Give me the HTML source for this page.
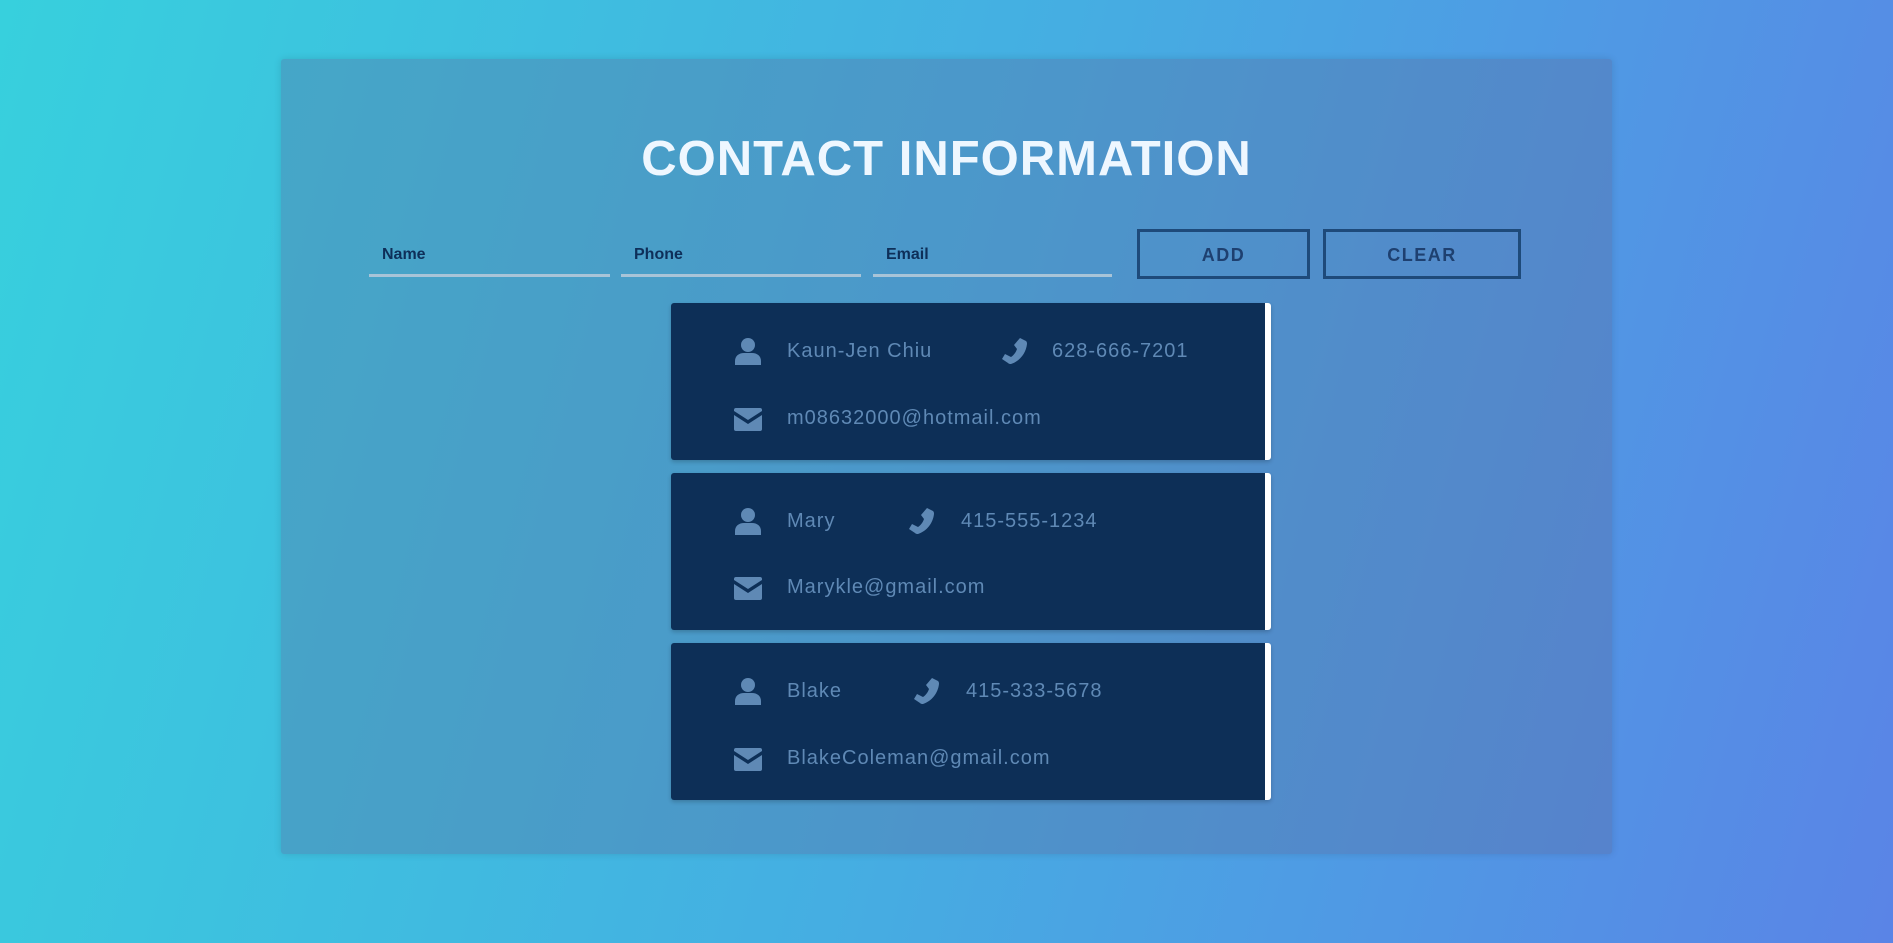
<!DOCTYPE html>
<html><head><meta charset="utf-8"><style>
*{margin:0;padding:0;box-sizing:border-box}
body{width:1893px;height:943px;overflow:hidden;background:linear-gradient(105deg,#37d0dd 0%,#45aee2 50%,#5a84e6 100%);font-family:"Liberation Sans",sans-serif;position:relative}
.panel{position:absolute;left:281px;top:59px;width:1331px;height:795px;background:rgba(90,105,155,0.34);box-shadow:0 0 8px rgba(0,0,0,0.12);border-radius:3px}
h1{position:absolute;left:0;width:1893px;top:134px;text-align:center;font-size:49px;font-weight:bold;color:#eef7ff;line-height:50px;letter-spacing:1px}
.in{position:absolute;top:245px;height:32px;border-bottom:3px solid #a8c4d8;font-size:16px;font-weight:bold;color:#0e2f59;padding-left:13px;line-height:20px}
.btn{position:absolute;top:229px;height:50px;border:3px solid #1e4a7a;color:#1e4070;font-weight:bold;font-size:18px;letter-spacing:1.5px;text-align:center;line-height:46px}
.card{position:absolute;left:671px;width:600px;height:157px;background:#0d2f57;border-right:6px solid #fff;border-radius:3px;box-shadow:0 2px 4px rgba(0,0,0,0.2)}
.t{position:absolute;color:#5f89b5;font-size:20px;letter-spacing:1px;line-height:24px}
.ic{position:absolute}
</style></head><body>
<div class="panel"></div>
<h1>CONTACT INFORMATION</h1>
<div class="in" style="left:369px;width:241px">Name</div>
<div class="in" style="left:621px;width:240px">Phone</div>
<div class="in" style="left:873px;width:239px">Email</div>
<div class="btn" style="left:1137px;width:173px">ADD</div>
<div class="btn" style="left:1323px;width:198px">CLEAR</div>

<div class="card" style="top:303px">
<svg class="ic" style="left:63px;top:34px" width="28" height="28" viewBox="0 0 28 28"><circle cx="14" cy="8" r="7" fill="#5f89b5"/><path d="M1 28v-4c0-5 4-8 9-8h8c5 0 9 3 9 8v4z" fill="#5f89b5"/></svg>
<div class="t" style="left:116px;top:36px">Kaun-Jen Chiu</div>
<svg class="ic" style="left:329px;top:34px" width="28" height="28" viewBox="0 0 28 28"><path d="M20 1l6 3c1 1 1 2 1 3-1 9-7 17-16 20-1 0-2 0-3-1l-6-4 3-5 6 3c3-2 5-5 6-8l-3-4z" fill="#5f89b5"/></svg>
<div class="t" style="left:381px;top:36px">628-666-7201</div>
<svg class="ic" style="left:63px;top:105px" width="28" height="23" viewBox="0 0 28 23"><path d="M0 2q0-2 2-2h24q2 0 2 2v1l-14 9-14-9z M0 7l14 9 14-9v14q0 2-2 2H2q-2 0-2-2z" fill="#5f89b5"/></svg>
<div class="t" style="left:116px;top:103px">m08632000@hotmail.com</div>
</div>

<div class="card" style="top:473px">
<svg class="ic" style="left:63px;top:34px" width="28" height="28" viewBox="0 0 28 28"><circle cx="14" cy="8" r="7" fill="#5f89b5"/><path d="M1 28v-4c0-5 4-8 9-8h8c5 0 9 3 9 8v4z" fill="#5f89b5"/></svg>
<div class="t" style="left:116px;top:36px">Mary</div>
<svg class="ic" style="left:236px;top:34px" width="28" height="28" viewBox="0 0 28 28"><path d="M20 1l6 3c1 1 1 2 1 3-1 9-7 17-16 20-1 0-2 0-3-1l-6-4 3-5 6 3c3-2 5-5 6-8l-3-4z" fill="#5f89b5"/></svg>
<div class="t" style="left:290px;top:36px">415-555-1234</div>
<svg class="ic" style="left:63px;top:104px" width="28" height="23" viewBox="0 0 28 23"><path d="M0 2q0-2 2-2h24q2 0 2 2v1l-14 9-14-9z M0 7l14 9 14-9v14q0 2-2 2H2q-2 0-2-2z" fill="#5f89b5"/></svg>
<div class="t" style="left:116px;top:102px">Marykle@gmail.com</div>
</div>

<div class="card" style="top:643px">
<svg class="ic" style="left:63px;top:34px" width="28" height="28" viewBox="0 0 28 28"><circle cx="14" cy="8" r="7" fill="#5f89b5"/><path d="M1 28v-4c0-5 4-8 9-8h8c5 0 9 3 9 8v4z" fill="#5f89b5"/></svg>
<div class="t" style="left:116px;top:36px">Blake</div>
<svg class="ic" style="left:241px;top:34px" width="28" height="28" viewBox="0 0 28 28"><path d="M20 1l6 3c1 1 1 2 1 3-1 9-7 17-16 20-1 0-2 0-3-1l-6-4 3-5 6 3c3-2 5-5 6-8l-3-4z" fill="#5f89b5"/></svg>
<div class="t" style="left:295px;top:36px">415-333-5678</div>
<svg class="ic" style="left:63px;top:105px" width="28" height="23" viewBox="0 0 28 23"><path d="M0 2q0-2 2-2h24q2 0 2 2v1l-14 9-14-9z M0 7l14 9 14-9v14q0 2-2 2H2q-2 0-2-2z" fill="#5f89b5"/></svg>
<div class="t" style="left:116px;top:103px">BlakeColeman@gmail.com</div>
</div>
</body></html>
